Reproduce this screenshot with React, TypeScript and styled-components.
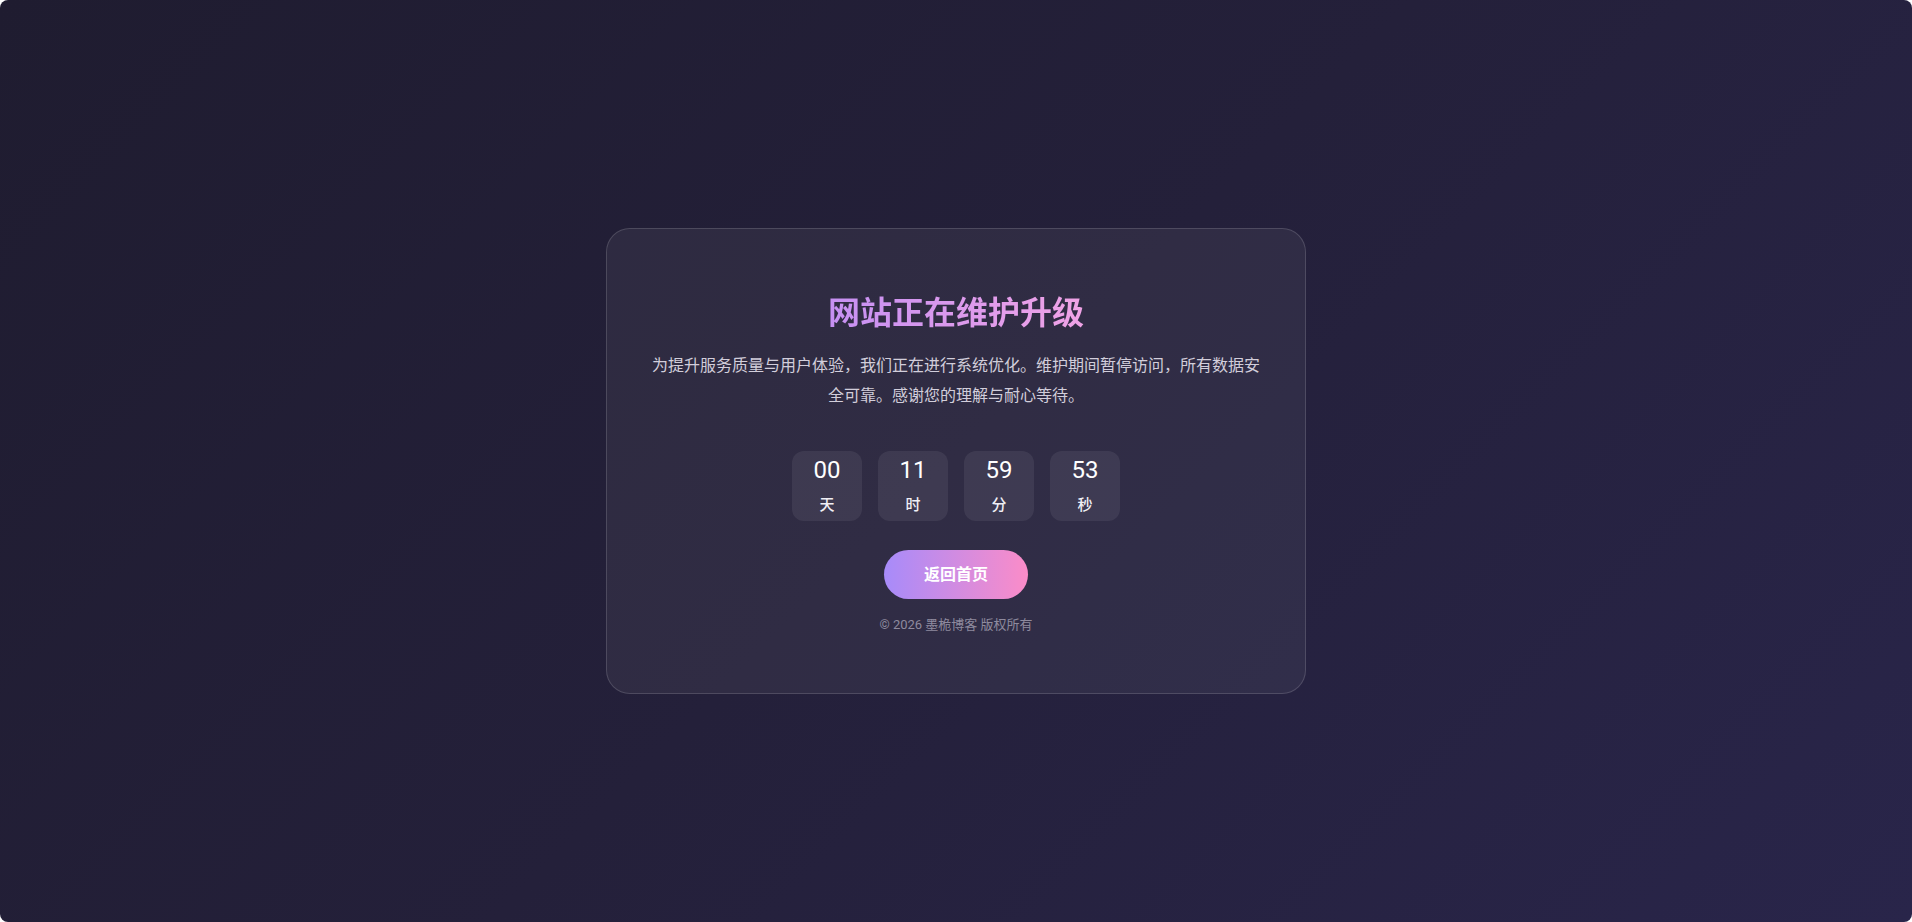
import * as React from "react";
import styled, { createGlobalStyle } from "styled-components";

const GlobalStyle = createGlobalStyle`
	html, body {
		margin: 0;
		padding: 0;
		background: #ffffff;
	}
	body {
		font-family: Roboto, "Noto Sans CJK SC", sans-serif;
	}
	* {
		box-sizing: border-box;
	}
`;

const Page = styled.div`
	width: 100vw;
	height: 100vh;
	border-radius: 8px;
	overflow: hidden;
	background: linear-gradient(135deg, #1f1c30 0%, #24203a 50%, #29254a 100%);
	display: flex;
	align-items: center;
	justify-content: center;
`;

const Card = styled.div`
	width: 700px;
	padding: 64px 40px 58px;
	border-radius: 24px;
	border: 1px solid rgba(255, 255, 255, 0.15);
	background: rgba(255, 255, 255, 0.055);
	display: flex;
	flex-direction: column;
	align-items: center;
	text-align: center;
`;

const Title = styled.h1`
	margin: 0 0 16px;
	font-size: 32px;
	line-height: 1.3;
	font-weight: 700;
	background: linear-gradient(90deg, #c690f3, #f0a3e6);
	-webkit-background-clip: text;
	background-clip: text;
	color: transparent;
`;

const Message = styled.p`
	margin: 0 0 40px;
	font-size: 16px;
	line-height: 1.9;
	color: #d2cedb;
`;

const Countdown = styled.div`
	display: flex;
	gap: 16px;
	margin-bottom: 29px;
`;

const Unit = styled.div`
	width: 70px;
	height: 70px;
	padding-top: 6px;
	border-radius: 12px;
	background: rgba(255, 255, 255, 0.07);
	display: flex;
	flex-direction: column;
	align-items: center;
	gap: 11px;
`;

const Value = styled.span`
	font-size: 24px;
	line-height: 27px;
	color: #ffffff;
`;

const Label = styled.span`
	font-size: 15px;
	line-height: 20px;
	font-weight: 500;
	color: #f0eff5;
`;

const HomeButton = styled.a`
	display: inline-block;
	padding: 14px 40px;
	border-radius: 999px;
	background: linear-gradient(90deg, #a78bfa, #fb8cc8);
	color: #ffffff;
	font-size: 16px;
	line-height: 21px;
	font-weight: 700;
	text-decoration: none;
	cursor: pointer;
`;

const Footer = styled.p`
	margin: 16px 0 0;
	font-size: 13px;
	line-height: 1.5;
	color: #8e8a9e;
`;

const units = [
	{ value: "00", label: "天" },
	{ value: "11", label: "时" },
	{ value: "59", label: "分" },
	{ value: "53", label: "秒" },
];

const App = () => {
	return (
		<>
			<GlobalStyle />
			<Page>
				<Card>
					<Title>网站正在维护升级</Title>
					<Message>
						为提升服务质量与用户体验，我们正在进行系统优化。维护期间暂停访问，所有数据安全可靠。感谢您的理解与耐心等待。
					</Message>
					<Countdown>
						{units.map((u) => (
							<Unit key={u.label}>
								<Value>{u.value}</Value>
								<Label>{u.label}</Label>
							</Unit>
						))}
					</Countdown>
					<HomeButton href="#">返回首页</HomeButton>
					<Footer>© 2026 墨桅博客 版权所有</Footer>
				</Card>
			</Page>
		</>
	);
};

export default App;
